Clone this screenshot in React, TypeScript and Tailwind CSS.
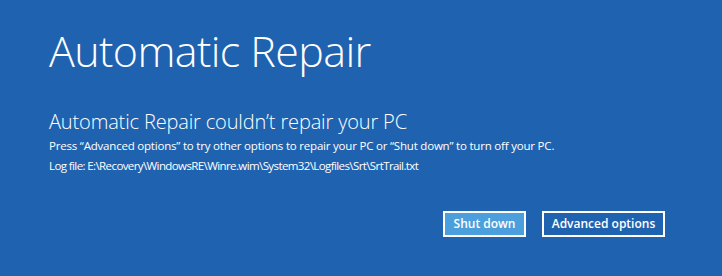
export default function App() {
  return (
    <div className="w-[722px] h-[276px] bg-[#1f63b0] text-white overflow-hidden" style={{ fontFamily: '"Open Sans", "Noto Sans", sans-serif' }}>
      <div className="pl-[49px] pt-[21px]">
        <h1 className="text-[43px] font-light leading-[60px] tracking-[-0.6px]">Automatic Repair</h1>
        <div className="mt-[28px] text-[20px] font-light leading-[26px] tracking-[-0.15px]">Automatic Repair couldn’t repair your PC</div>
        <div className="mt-[1px] text-[11.5px] leading-[20px] tracking-[-0.2px]">Press “Advanced options” to try other options to repair your PC or “Shut down” to turn off your PC.</div>
        <div className="text-[11.5px] leading-[20px] tracking-[-0.6px]">Log file: E:\Recovery\WindowsRE\Winre.wim\System32\Logfiles\Srt\SrtTrail.txt</div>
      </div>
      <div className="flex justify-end gap-[16px] pr-[57px] mt-[35px]">
        <button className="w-[83px] h-[26px] border-2 border-white bg-[#4a9fdc] text-[12px] font-semibold">Shut down</button>
        <button className="w-[123px] h-[26px] border-2 border-white bg-[#1f63b0] text-[12px] font-semibold">Advanced options</button>
      </div>
    </div>
  );
}
